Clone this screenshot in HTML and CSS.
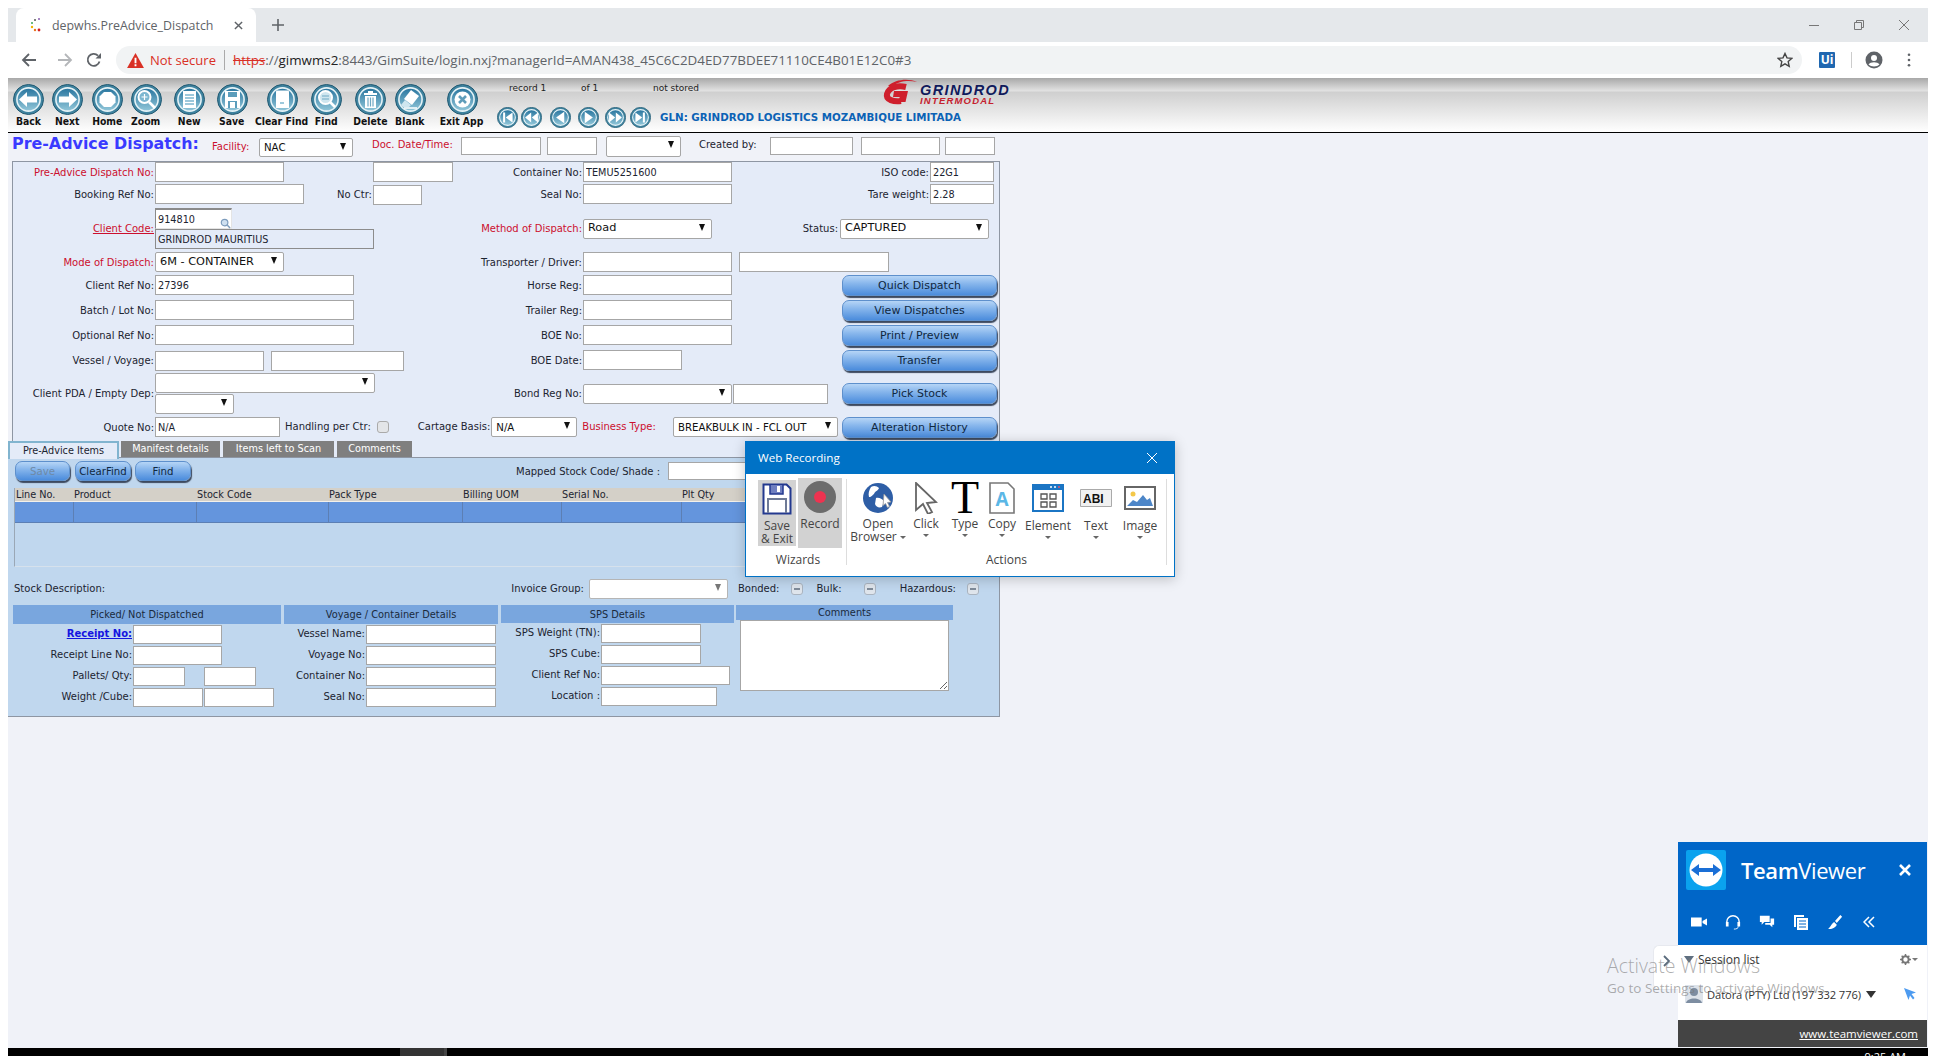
FILE: index.html
```html
<!DOCTYPE html>
<html lang="en">
<head>
<meta charset="utf-8">
<title>depwhs.PreAdvice_Dispatch</title>
<link rel="stylesheet" href="styles.css">
</head>
<body>
<svg class="defs" aria-hidden="true">
  <defs>
    <linearGradient id="disc" x1="0" y1="0" x2="0" y2="1"><stop offset="0" stop-color="#27749e"/><stop offset="1" stop-color="#93c8da"/></linearGradient>
    <symbol id="ring" viewBox="0 0 31 31"><circle cx="15.5" cy="15.5" r="15" fill="#3f839f" stroke="#235a72"/><circle cx="15.5" cy="15.5" r="11.6" fill="url(#disc)" stroke="#e6f3f7" stroke-width="1.6"/></symbol>
  </defs>
</svg>

<div class="window">
  <div class="tabstrip">
    <div class="ctab">
      <svg class="fav" viewBox="0 0 16 16"><circle cx="10" cy="2" r="1" fill="#8a5fb0"/><circle cx="6" cy="3" r="1" fill="#555"/><circle cx="3" cy="6" r="1" fill="#3aa655"/><circle cx="3" cy="10" r="1.2" fill="#f2b400"/><circle cx="6" cy="13" r="1.2" fill="#e9711c"/><circle cx="10" cy="13" r="1.4" fill="#d32020"/></svg>
      <span class="ctab-title">depwhs.PreAdvice_Dispatch</span>
      <svg class="ctab-x" viewBox="0 0 10 10"><path d="M1 1l8 8M9 1l-8 8" stroke="#5f6368" stroke-width="1.6"/></svg>
    </div>
    <svg class="plus" viewBox="0 0 12 12"><path d="M6 0v12M0 6h12" stroke="#5f6368" stroke-width="1.6"/></svg>
    <div class="winctl">
      <svg viewBox="0 0 12 12"><path d="M1 6.5h10" stroke="#777"/></svg>
      <svg viewBox="0 0 12 12"><path d="M1.5 3.5h7v7h-7zM3.5 3.5v-2h7v7h-2" fill="none" stroke="#777"/></svg>
      <svg viewBox="0 0 12 12"><path d="M1 1l10 10M11 1L1 11" stroke="#777"/></svg>
    </div>
  </div>

  <div class="navbar">
    <svg class="nav-ic" viewBox="0 0 16 16"><path d="M15 8H2M8 2L2 8l6 6" fill="none" stroke="#5f6368" stroke-width="1.8"/></svg>
    <svg class="nav-ic nav-fwd" viewBox="0 0 16 16"><path d="M1 8h13M8 2l6 6-6 6" fill="none" stroke="#b4b6b9" stroke-width="1.8"/></svg>
    <svg class="nav-ic nav-rel" viewBox="0 0 16 16"><path d="M13.5 9.5A6 6 0 1 1 12 3.6" fill="none" stroke="#5f6368" stroke-width="1.8"/><path d="M9.5 6.5H15V1z" fill="#5f6368"/></svg>
    <div class="omni">
      <svg class="warn" viewBox="0 0 18 16"><path d="M9 0l9 16H0z" fill="#d93025"/><path d="M8 5h2v6H8zM8 12h2v2H8z" fill="#fff"/></svg>
      <span class="insecure">Not secure</span>
      <span class="omni-sep"></span>
      <span class="url"><s class="https">https</s>://<b class="host">gimwms2</b>:8443/GimSuite/login.nxj?managerId=AMAN438_45C6C2D4ED77BDEE71110CE4B01E12C0#3</span>
      <svg class="star" viewBox="0 0 16 16"><path d="M8 1.5l2 4.4 4.8.5-3.6 3.2 1 4.7L8 11.9l-4.200 2.400 1-4.700L1.200 6.400 6 5.900z" fill="none" stroke="#444" stroke-width="1.400"/></svg>
    </div>
    <span class="ui-ext">Ui</span>
    <span class="nav-sep"></span>
    <svg class="avatar" viewBox="0 0 18 18"><circle cx="9" cy="9" r="8.500" fill="#5f6368"/><circle cx="9" cy="7" r="3" fill="#fff"/><path d="M3.500 13.500c2-3 9-3 11 0-2.500 2.500-8.500 2.500-11 0z" fill="#fff"/></svg>
    <svg class="kebab" viewBox="0 0 4 16"><circle cx="2" cy="2" r="1.500" fill="#5f6368"/><circle cx="2" cy="8" r="1.500" fill="#5f6368"/><circle cx="2" cy="14" r="1.500" fill="#5f6368"/></svg>
  </div>

  <header class="toolbar">
    <div class="tools">
      <div class="tb"><svg viewBox="0 0 31 31"><use href="#ring"/><path d="M6 15.500l8-7.500v4.500h10v6H14V23z" fill="#fff"/></svg><span>Back</span></div>
      <div class="tb m-1"><svg viewBox="0 0 31 31"><use href="#ring"/><path d="M25 15.500L17 8v4.500H7v6h10V23z" fill="#fff"/></svg><span>Next</span></div>
      <div class="tb"><svg viewBox="0 0 31 31"><use href="#ring"/><path d="M12 8h7l4.500 4.500v6L19 23h-7l-4.500-4.500v-6z" fill="#fff"/></svg><span>Home</span></div>
      <div class="tb m-1"><svg viewBox="0 0 31 31"><use href="#ring"/><circle cx="13.500" cy="13" r="6" fill="#7db7d0" stroke="#fff" stroke-width="2"/><path d="M18 18l6 6" stroke="#fff" stroke-width="2.600"/><path d="M10.500 13h6M13.500 10v6" stroke="#fff" stroke-width="1.200"/></svg><span>Zoom</span></div>
      <div class="tb m3"><svg viewBox="0 0 31 31"><use href="#ring"/><path d="M9 7h13v17H9z" fill="#fff"/><path d="M11 11h9M11 14h9M11 17h9M11 20h9" stroke="#7db7d0" stroke-width="1.500"/></svg><span>New</span></div>
      <div class="tb m3"><svg viewBox="0 0 31 31"><use href="#ring"/><path d="M8 7h15v17H8z" fill="#fff"/><path d="M11 8h9v5h-9zM11 17h9v7h-9z" fill="#5b9dbb"/><path d="M13 18h5v6h-5z" fill="#fff"/></svg><span>Save</span></div>
      <div class="tb m10"><svg viewBox="0 0 31 31"><use href="#ring"/><path d="M9 7.500a1 1 0 0 1 1-1h11a1 1 0 0 1 1 1V24H9z" fill="#fff"/><path d="M13 19h4" stroke="#7db7d0" stroke-width="1.500"/></svg><span>Clear Find</span></div>
      <div class="tb m4"><svg viewBox="0 0 31 31"><use href="#ring"/><circle cx="14.500" cy="13.500" r="6.500" fill="#cfe6ef" stroke="#fff" stroke-width="2"/><path d="M19 18l5 5" stroke="#fff" stroke-width="2.600"/><path d="M11 12h7M11 15h7" stroke="#6fa9c4"/></svg><span>Find</span></div>
      <div class="tb m4"><svg viewBox="0 0 31 31"><use href="#ring"/><path d="M9 9h13v2H9zM13 7h5v2h-5z" fill="#fff"/><path d="M10 12h11v12H10z" fill="#fff"/><path d="M13 13.500v9M15.500 13.500v9M18 13.500v9" stroke="#6fa9c4" stroke-width="1.200"/></svg><span>Delete</span></div>
      <div class="tb"><svg viewBox="0 0 31 31"><use href="#ring"/><path d="M16 6l8 6-7 9-8-6z" fill="#fff"/><path d="M10 16l6 5-2 2H8l-2-2z" fill="#cfe6ef"/><path d="M9 24h13" stroke="#fff" stroke-width="1.500"/></svg><span>Blank</span></div>
      <div class="tb m12"><svg viewBox="0 0 31 31"><use href="#ring"/><circle cx="15.500" cy="15.500" r="8" fill="#fff"/><path d="M12 12l7 7M19 12l-7 7" stroke="#5f9dba" stroke-width="2.600"/></svg><span>Exit App</span></div>
    </div>
    <div class="recnav">
      <div class="recinfo"><span class="ri1">record 1</span><span class="ri2">of 1</span><span>not stored</span></div>
      <div class="recbtm">
        <svg class="nb" viewBox="0 0 31 31"><use href="#ring"/><path d="M9 8h3v15H9zM23 8v15l-10-7.500z" fill="#fff"/></svg>
        <svg class="nb" viewBox="0 0 31 31"><use href="#ring"/><path d="M15 8v15L6 15.500zM25 8v15l-9-7.500z" fill="#fff"/></svg>
        <svg class="nb nb-gap" viewBox="0 0 31 31"><use href="#ring"/><path d="M21 7v17L9 15.500z" fill="#fff"/></svg>
        <svg class="nb nb-gap2" viewBox="0 0 31 31"><use href="#ring"/><path d="M10 7v17l12-8.500z" fill="#fff"/></svg>
        <svg class="nb nb-gap3" viewBox="0 0 31 31"><use href="#ring"/><path d="M6 8v15l9-7.500zM16 8v15l9-7.500z" fill="#fff"/></svg>
        <svg class="nb nb-gap4" viewBox="0 0 31 31"><use href="#ring"/><path d="M8 8v15l10-7.500zM19 8h3v15h-3z" fill="#fff"/></svg>
        <span class="gln">GLN: GRINDROD LOGISTICS MOZAMBIQUE LIMITADA</span>
      </div>
    </div>
    <div class="logo">
      <svg class="logo-g" viewBox="0 0 37 26"><path d="M7 7C14 0 28-1 36 3 27 1 17 2 10.500 8z" fill="#cf1f2c"/><path d="M25 8C17 6 8 8 6 15c-1.500 6 7 8 14 7" fill="none" stroke="#cf1f2c" stroke-width="6"/><path d="M13 12h14l-2.500 11h-7l1.200-5H12z" fill="#cf1f2c"/></svg>
      <div class="logo-t"><b>GRINDROD</b><i>INTERMODAL</i></div>
    </div>
  </header>

  <main class="page">
    <div class="titlebar">
      <h1>Pre-Advice Dispatch:</h1>
      <label class="lbl req t-fac">Facility:</label>
      <div class="sel w94 t-s1"><select><option>NAC</option></select></div>
      <label class="lbl req t-doc">Doc. Date/Time:</label>
      <input class="w80 t-i1" type="text">
      <input class="w50 t-i2" type="text">
      <div class="sel w75 t-s2"><select><option></option></select></div>
      <label class="lbl t-crt">Created by:</label>
      <input class="w83 t-i3" type="text">
      <input class="w79 t-i4" type="text">
      <input class="w50 t-i4b" type="text">
    </div>

    <div class="form">
      <div class="row r1">
        <label class="lbl la req">Pre-Advice Dispatch No:</label>
        <div class="col2"><div class="a"><input class="w129" type="text"></div><input class="w80" type="text"></div>
        <label class="lbl lc">Container No:</label>
        <div class="col4"><input class="w149" type="text" value="TEMU5251600"><label class="lbl push">ISO code:</label><input class="w64 rgt3" type="text" value="22G1"></div>
      </div>
      <div class="row r2">
        <label class="lbl la">Booking Ref No:</label>
        <div class="col2"><div class="a"><input class="w149" type="text"><label class="lbl">No Ctr:</label></div><input class="w49 mt1" type="text"></div>
        <label class="lbl lc">Seal No:</label>
        <div class="col4"><input class="w149" type="text"><label class="lbl push">Tare weight:</label><input class="w64 rgt3" type="text" value="2.28"></div>
      </div>
      <div class="row r3 mid">
        <label class="lbl la req link">Client Code:</label>
        <div class="col2 stack">
          <div class="lookup"><input class="w77 bevel" type="text" value="914810">
            <svg class="lens" viewBox="0 0 12 12"><circle cx="5" cy="5" r="3.600" fill="#cfe0f0" stroke="#7d9cbc" stroke-width="1.300"/><path d="M8 8l3 3" stroke="#7d9cbc" stroke-width="1.600"/></svg>
          </div>
          <input class="w219 ro" type="text" value="GRINDROD MAURITIUS">
        </div>
        <label class="lbl lc req">Method of Dispatch:</label>
        <div class="col4 mid"><div class="sel w129 big"><select><option>Road</option></select></div><label class="lbl push">Status:</label><div class="sel w149 big rgt8"><select><option>CAPTURED</option></select></div></div>
      </div>
      <div class="row r4">
        <label class="lbl la req">Mode of Dispatch:</label>
        <div class="col2"><div class="sel w129 big"><select><option>6M - CONTAINER</option></select></div></div>
        <label class="lbl lc">Transporter / Driver:</label>
        <div class="col4 gap7"><input class="w149" type="text"><input class="w150" type="text"></div>
      </div>
      <div class="row r5">
        <label class="lbl la">Client Ref No:</label>
        <div class="col2"><input class="w199" type="text" value="27396"></div>
        <label class="lbl lc">Horse Reg:</label>
        <div class="col4"><input class="w149" type="text"><button class="btn act" type="button">Quick Dispatch</button></div>
      </div>
      <div class="row r5">
        <label class="lbl la">Batch / Lot No:</label>
        <div class="col2"><input class="w199" type="text"></div>
        <label class="lbl lc">Trailer Reg:</label>
        <div class="col4"><input class="w149" type="text"><button class="btn act" type="button">View Dispatches</button></div>
      </div>
      <div class="row r5">
        <label class="lbl la">Optional Ref No:</label>
        <div class="col2"><input class="w199" type="text"></div>
        <label class="lbl lc">BOE No:</label>
        <div class="col4"><input class="w149" type="text"><button class="btn act" type="button">Print / Preview</button></div>
      </div>
      <div class="row r8">
        <label class="lbl la">Vessel / Voyage:</label>
        <div class="col2 gap7 mt1"><input class="w109" type="text"><input class="w133" type="text"></div>
        <label class="lbl lc">BOE Date:</label>
        <div class="col4"><input class="w99" type="text"><button class="btn act" type="button">Transfer</button></div>
      </div>
      <div class="row r9 mid">
        <label class="lbl la">Client PDA / Empty Dep:</label>
        <div class="col2 stack gap1">
          <div class="sel w220"><select><option></option></select></div>
          <div class="sel w79"><select><option></option></select></div>
        </div>
        <label class="lbl lc">Bond Reg No:</label>
        <div class="col4 gap1 mid"><div class="sel w149"><select><option></option></select></div><input class="w95" type="text"><button class="btn act act2" type="button">Pick Stock</button></div>
      </div>
      <div class="row r10">
        <label class="lbl la">Quote No:</label>
        <input class="w125" type="text" value="N/A">
        <label class="lbl h-l">Handling per Ctr:</label>
        <input class="chk h-c" type="checkbox">
        <label class="lbl c-l">Cartage Basis:</label>
        <div class="sel w86 c-s"><select><option>N/A</option></select></div>
        <label class="lbl req b-l">Business Type:</label>
        <div class="sel w165 b-s"><select><option>BREAKBULK IN - FCL OUT</option></select></div>
        <button class="btn act b-b" type="button">Alteration History</button>
      </div>
    </div>

    <nav class="tabs">
      <a class="tab on">Pre-Advice Items</a>
      <a class="tab t1">Manifest details</a>
      <a class="tab t2">Items left to Scan</a>
      <a class="tab t3">Comments</a>
    </nav>

    <section class="lower">
      <div class="l-btns">
        <button class="btn sm dis" type="button">Save</button>
        <button class="btn sm" type="button">ClearFind</button>
        <button class="btn sm" type="button">Find</button>
        <label class="lbl mapped">Mapped Stock Code/ Shade :</label>
        <input class="w120" type="text">
      </div>
      <div class="gridwrap">
        <table class="grid">
          <colgroup><col class="c1"><col class="c2"><col class="c3"><col class="c4"><col class="c5"><col class="c6"><col class="c7"></colgroup>
          <thead><tr><th>Line No.</th><th>Product</th><th>Stock Code</th><th>Pack Type</th><th>Billing UOM</th><th>Serial No.</th><th>Plt Qty</th></tr></thead>
          <tbody><tr><td></td><td></td><td></td><td></td><td></td><td></td><td></td></tr></tbody>
        </table>
      </div>
      <div class="stock">
        <label class="lbl">Stock Description:</label>
        <label class="lbl s-inv">Invoice Group:</label>
        <div class="sel w139 dimmed"><select><option></option></select></div>
        <label class="lbl s-bon">Bonded:</label><span class="dash d1"></span>
        <label class="lbl s-bul">Bulk:</label><span class="dash d2"></span>
        <label class="lbl s-haz">Hazardous:</label><span class="dash d3"></span>
      </div>
      <div class="details">
        <div class="sect s-a">
          <h3>Picked/ Not Dispatched</h3>
          <div class="drow"><a class="lbl dl link-b">Receipt No:</a><input class="w89" type="text"></div>
          <div class="drow"><label class="lbl dl">Receipt Line No:</label><input class="w89" type="text"></div>
          <div class="drow"><label class="lbl dl">Pallets/ Qty:</label><input class="w52" type="text"><input class="w52 ml19" type="text"></div>
          <div class="drow"><label class="lbl dl">Weight /Cube:</label><input class="w70" type="text"><input class="w70 ml1" type="text"></div>
        </div>
        <div class="sect s-b">
          <h3>Voyage / Container Details</h3>
          <div class="drow"><label class="lbl dl">Vessel Name:</label><input class="w130" type="text"></div>
          <div class="drow"><label class="lbl dl">Voyage No:</label><input class="w130" type="text"></div>
          <div class="drow"><label class="lbl dl">Container No:</label><input class="w130" type="text"></div>
          <div class="drow"><label class="lbl dl">Seal No:</label><input class="w130" type="text"></div>
        </div>
        <div class="sect s-c">
          <h3>SPS Details</h3>
          <div class="drow"><label class="lbl dl">SPS Weight (TN):</label><input class="w100" type="text"></div>
          <div class="drow"><label class="lbl dl">SPS Cube:</label><input class="w100" type="text"></div>
          <div class="drow"><label class="lbl dl">Client Ref No:</label><input class="w129" type="text"></div>
          <div class="drow"><label class="lbl dl">Location :</label><input class="w116" type="text"></div>
        </div>
        <div class="sect s-d">
          <h3>Comments</h3>
          <textarea></textarea>
        </div>
      </div>
    </section>
  </main>

  <footer class="taskbar"><span class="task-item"></span><span class="clock">9:25 AM</span></footer>
</div>

<aside class="rec">
  <div class="rec-title"><span>Web Recording</span>
    <svg viewBox="0 0 12 12"><path d="M1 1l10 10M11 1L1 11" stroke="#fff" stroke-width="1"/></svg>
  </div>
  <div class="rec-body">
    <div class="grp g-w">
      <div class="g-tools wiz">
        <div class="wtool w-save">
          <svg viewBox="0 0 30 32"><path d="M1.500 1.500h23l4 4v25h-27z" fill="#fff" stroke="#23398f" stroke-width="2"/><path d="M8 2v9h13V2" fill="#6f7fc0" stroke="#23398f" stroke-width="1.500"/><path d="M15 3h3v6h-3z" fill="#fff"/><path d="M6 30V16h18v14" fill="none" stroke="#6e7a96" stroke-width="2"/></svg>
          <span>Save<br>&amp; Exit</span>
        </div>
        <div class="wtool w-rec">
          <svg viewBox="0 0 32 32"><circle cx="16" cy="16" r="16" fill="#6c6c6c"/><circle cx="16" cy="16" r="6" fill="#ee3350"/></svg>
          <span>Record</span>
        </div>
      </div>
      <p class="cap">Wizards</p>
    </div>
    <div class="grp g-a">
      <div class="g-tools act-tools">
        <div class="tool t48"><div class="ti"><svg class="i30" viewBox="0 0 30 30"><circle cx="15" cy="15" r="15" fill="#2e5ea6"/><path d="M8 4c3-2 6-1 8 1-1 3-4 3-5 6-2 1-2 3-5 3-1-3 0-7 2-10zM13 15c3-1 6 1 8 3l-2 6c-3 1-6 0-7-3z" fill="#fff"/><path d="M21 11l7 8-3.500.5 2 4-2 1-2-4-2.500 2z" fill="#fff" stroke="#999" stroke-width=".8"/></svg></div><span>Open<br>Browser<i class="care inl"></i></span></div>
        <div class="tool t48"><div class="ti"><svg class="i-cur" viewBox="0 0 24 32"><path d="M2 1l20 19-9 1 5 9-4 2-5-10-7 6z" fill="#fff" stroke="#666" stroke-width="1.800"/></svg></div><span>Click</span><i class="care"></i></div>
        <div class="tool t30"><div class="ti"><span class="bigT">T</span></div><span>Type</span><i class="care"></i></div>
        <div class="tool t44"><div class="ti"><svg class="i-doc" viewBox="0 0 26 32"><path d="M1 1h18l6 6v24H1z" fill="#fff" stroke="#777" stroke-width="1.600"/><text x="13" y="24" class="doc-a">A</text></svg></div><span>Copy</span><i class="care"></i></div>
        <div class="tool t48 low"><div class="ti"><svg class="i-el" viewBox="0 0 32 28"><path d="M0 0h32v28H0z" fill="#1b75c4"/><path d="M2 6h28v20H2z" fill="#fff"/><path d="M9 10h6v5H9zM18 10h6v5h-6zM9 18h6v5H9zM18 18h6v5h-6z" fill="none" stroke="#555" stroke-width="1.300"/><circle cx="19" cy="3" r="1" fill="#fff"/><circle cx="23" cy="3" r="1" fill="#fff"/><circle cx="27" cy="3" r="1" fill="#e8516b"/></svg></div><span>Element</span><i class="care"></i></div>
        <div class="tool t48 low"><div class="ti"><svg class="i-txt" viewBox="0 0 32 18"><path d="M.5.500h31v17H.500z" fill="#f1f1f1" stroke="#aaa"/><text x="3" y="14" class="abi">ABI</text></svg></div><span>Text</span><i class="care"></i></div>
        <div class="tool t40 low"><div class="ti"><svg class="i-img" viewBox="0 0 32 24"><path d="M1 1h30v22H1z" fill="#fff" stroke="#666" stroke-width="2"/><circle cx="9" cy="8" r="2.500" fill="#f4c84a"/><path d="M3 20l6-6 4 2 6-7 4 5 3-2 3 8z" fill="#4d86c8"/></svg></div><span>Image</span><i class="care"></i></div>
      </div>
      <p class="cap">Actions</p>
    </div>
  </div>
</aside>

<aside class="tv">
  <div class="tv-head">
    <div class="tv-top">
      <svg class="tv-logo" viewBox="0 0 40 40"><rect width="40" height="40" rx="2" fill="#0aa2ee"/><circle cx="20" cy="20" r="16.500" fill="#fff"/><path d="M5 20l8-6v4h14v-4l8 6-8 6v-4H13v4z" fill="#1a6fd6"/></svg>
      <span class="tv-name"><b>Team</b>Viewer</span>
      <svg class="tv-x" viewBox="0 0 12 12"><path d="M1 1l10 10M11 1L1 11" stroke="#fff" stroke-width="2.600"/></svg>
    </div>
    <div class="tv-icons">
      <svg viewBox="0 0 18 12"><path d="M0 1h12v10H0zM13 5l5-3v8l-5-3z" fill="#fff"/></svg>
      <svg viewBox="0 0 18 18"><path d="M2 11V9a7 7 0 0 1 14 0v2" fill="none" stroke="#fff" stroke-width="1.600"/><path d="M1 9h3v5H1zM14 9h3v5h-3z" fill="#fff"/><path d="M15 14c0 2-2 3-5 3" fill="none" stroke="#fff"/></svg>
      <svg viewBox="0 0 18 16"><path d="M1 1h11v7H6l-3 3V8H1z" fill="#fff"/><path d="M13 4h4v7h-2v3l-3-3H7V9h6z" fill="#fff"/></svg>
      <svg viewBox="0 0 16 16"><path d="M1 1h10v2H3v10H1zM4 4h11v12H4z" fill="#fff"/><path d="M6 7h7M6 10h7M6 13h7" stroke="#0066c8"/></svg>
      <svg viewBox="0 0 18 18"><path d="M15 1l2 2-6 7-2-2zM8 9l3 3c-1 3-5 5-10 5 3-2 3-5 7-8z" fill="#fff"/></svg>
      <svg class="tv-more" viewBox="0 0 12 12"><path d="M6 1L1 6l5 5M11 1L6 6l5 5" fill="none" stroke="#fff" stroke-width="1.500"/></svg>
    </div>
  </div>
  <div class="tv-list">
    <div class="tv-l1"><i class="tri"></i><span>Session list</span>
      <svg class="gear" viewBox="0 0 12 12"><circle cx="6" cy="6" r="3.500" fill="none" stroke="#777" stroke-width="2.200"/><path d="M6 0v2.500M6 9.500V12M0 6h2.500M9.500 6H12M1.800 1.800l1.700 1.700M8.500 8.500l1.700 1.700M10.200 1.800L8.500 3.500M3.500 8.500l-1.700 1.700" stroke="#777" stroke-width="1.600"/></svg>
      <i class="tri sm-tri"></i>
    </div>
    <div class="tv-l2">
      <svg class="tv-av" viewBox="0 0 18 18"><path d="M0 0h18v18H0z" fill="#dde3ea"/><circle cx="9" cy="7" r="4" fill="#7d8da1"/><path d="M1 18c1-6 15-6 16 0z" fill="#7d8da1"/></svg>
      <span>Datora (PTY) Ltd (197 332 776)</span><i class="tri dark"></i>
      <svg class="tv-cur" viewBox="0 0 12 12"><path d="M0 0l12 4.500-4.500 1.500 3 4-1.500 1.500-3-4L4.500 12z" fill="#4d9bf0"/></svg>
    </div>
  </div>
  <div class="tv-foot"><a>www.teamviewer.com</a></div>
  <div class="tv-side"><svg viewBox="0 0 8 12"><path d="M1 1l5 5-5 5" fill="none" stroke="#5a6b7d" stroke-width="1.800"/></svg></div>
</aside>

<div class="activate"><p>Activate Windows</p><small>Go to Settings to activate Windows.</small></div>
</body>
</html>
```
FILE: styles.css
```css
* { box-sizing: border-box; }
html, body { margin: 0; padding: 0; }
body { position: relative; width: 1936px; height: 1056px; overflow: hidden; background: #fff; font-family: "DejaVu Sans", Verdana, sans-serif; font-size: 10px; color: #1c2430; }
.defs { position: absolute; width: 0; height: 0; }
svg { display: block; flex: none; }

.window { display: flex; flex-direction: column; height: 1056px; padding: 8px 8px 0; }

/* browser chrome */
.tabstrip { height: 34px; background: #e5e8eb; display: flex; align-items: flex-end; padding-left: 8px; flex: none; }
.ctab { width: 240px; height: 34px; background: #fff; border-radius: 8px 8px 0 0; display: flex; align-items: center; padding-left: 13px; }
.fav { width: 16px; height: 16px; }
.ctab-title { margin-left: 7px; width: 166px; font: 12.4px "Open Sans", sans-serif; color: #5f6368; white-space: nowrap; }
.ctab-x { width: 9px; height: 9px; margin-left: 16px; }
.plus { width: 12px; height: 12px; margin: 0 0 11px 16px; }
.winctl { margin-left: auto; display: flex; gap: 33px; align-self: center; margin-right: 18px; }
.winctl svg { width: 12px; height: 12px; }

.navbar { height: 36px; display: flex; align-items: center; flex: none; background: #fff; }
.nav-ic { width: 16px; height: 16px; margin-left: 13px; }
.nav-fwd { margin-left: 20px; }
.nav-rel { margin-left: 13px; }
.omni { margin-left: 14px; width: 1686px; height: 28px; background: #f1f3f4; border-radius: 14px; display: flex; align-items: center; padding-left: 11px; }
.warn { width: 17px; height: 15px; }
.insecure { margin-left: 6px; font: 13px "Open Sans", sans-serif; color: #d93025; }
.omni-sep { width: 1px; height: 20px; background: #aaa; margin: 0 8px; }
.url { font: 13.380px "Open Sans", sans-serif; color: #5f6368; white-space: nowrap; }
.https { color: #d93025; }
.host { font-weight: 400; color: #222; }
.star { width: 16px; height: 16px; margin-left: auto; margin-right: 9px; }
.ui-ext { margin-left: 17px; width: 16px; height: 16px; background: #2067b0; color: #fff; font: 700 12px/16px "Open Sans", sans-serif; text-align: center; border-radius: 1px; }
.nav-sep { width: 1px; height: 16px; background: #ccc; margin-left: 16px; }
.avatar { width: 18px; height: 18px; margin-left: 13px; }
.kebab { width: 4px; height: 14px; margin-left: 24px; }

/* app toolbar */
.toolbar { height: 55px; flex: none; display: flex; border-bottom: 1px solid #000; background: linear-gradient(#a8a8a8 0, #dedede 12px, #e2e2e2 13px, #cfcfcf 14px, #fff 54px); }
.tools { display: flex; width: 492px; padding-top: 6px; flex: none; }
.tb { width: 40px; display: flex; flex-direction: column; align-items: center; }
.tb svg { width: 31px; height: 31px; }
.tb span { font: 700 10px/13px "DejaVu Sans", sans-serif; color: #111; white-space: nowrap; transform: scaleX(.93); }
.m-1 { margin-left: -1px; }
.m3 { margin-left: 3px; }
.m4 { margin-left: 4px; }
.m10 { margin-left: 10px; }
.m12 { margin-left: 12px; }

.recnav { width: 380px; flex: none; }
.recinfo { height: 28px; padding: 4px 0 0 9px; display: flex; font: 9px/12px "DejaVu Sans", sans-serif; color: #222; }
.ri1 { width: 72px; }
.ri2 { width: 72px; }
.recbtm { display: flex; align-items: center; height: 22px; padding-left: 0; }
.nb { width: 21px; height: 21px; margin-right: 4px; margin-left: -1px; }
.nb:first-child { margin-left: -3px; }
.nb-gap { margin-left: 4px; }
.nb-gap2 { margin-left: 3px; }
.nb-gap3 { margin-left: 2px; }
.nb-gap4 { margin-left: 0; }
.gln { font: 700 10.300px "DejaVu Sans", sans-serif; color: #0b62b5; margin-left: 5px; white-space: nowrap; }
.logo { display: flex; margin-left: 1px; margin-top: 1px; height: 26px; }
.logo-g { width: 37px; height: 26px; }
.logo-t { display: flex; flex-direction: column; margin-left: 2px; padding-top: 6px; }
.logo-t b { font: italic 700 14.500px/11px "Liberation Sans", sans-serif; color: #101a5c; letter-spacing: 1.400px; white-space: nowrap; }
.logo-t i { font: italic 700 9.500px/10px "Liberation Sans", sans-serif; color: #c5202d; letter-spacing: 1.200px; white-space: nowrap; }

/* page */
.page { flex: 1; background: #f0f2f8; display: flex; flex-direction: column; min-height: 0; }
.titlebar { height: 28px; flex: none; display: flex; align-items: center; padding-left: 4px; }
h1 { margin: -7px 0 0; font: 700 15.900px "DejaVu Sans", sans-serif; color: #3a3aff; white-space: nowrap; width: 200px; flex: none; }
input[type=text] { height: 20px; padding: 1px 2px 0; border: 1px solid #a6a6a6; background: #fff; font: 9.700px "DejaVu Sans", sans-serif; color: #1c2430; outline: 0; flex: none; border-radius: 0; }
.sel { position: relative; height: 20px; flex: none; }
.sel select { width: 100%; height: 100%; appearance: none; border: 1px solid #a6a6a6; border-radius: 2px; background: #fff; padding: 0 4px; font: 10.200px "DejaVu Sans", sans-serif; color: #111; outline: 0; }
.sel.big select { font-size: 11.300px; padding-bottom: 2px; }
.sel::after { content: ""; position: absolute; right: 7px; top: 5px; border: 3.500px solid transparent; border-top: 7px solid #111; border-bottom: 0; }
.lbl { white-space: nowrap; line-height: 20px; flex: none; }
.req { color: #cc0f2e; }
.t-fac { width: 47px; }
.t-s1 { height: 19px; margin-top: 1px; }
.t-doc { margin-left: 19px; width: 89px; margin-top: -4px; }
.t-i1 { margin-top: -2px; height: 18px !important; }
.t-i2 { margin-left: 6px; margin-top: -2px; height: 18px !important; }
.t-s2 { margin-left: 9px; margin-top: -1px; height: 21px; }
.t-crt { margin-left: 18px; width: 71px; margin-top: -4px; }
.t-i3, .t-i4, .t-i4b { margin-top: -2px; height: 18px !important; }
.t-i4 { margin-left: 8px; }
.t-i4b { margin-left: 5px; }

.w49 { width: 49px; } .w50 { width: 50px; } .w52 { width: 52px; } .w64 { width: 64px; } .w70 { width: 70px; } .w75 { width: 75px; } .w77 { width: 77px; }
.w79 { width: 79px; } .w80 { width: 80px; } .w83 { width: 83px; } .w86 { width: 86px; } .w89 { width: 89px; } .w94 { width: 94px; } .w95 { width: 95px; }
.w99 { width: 99px; } .w100 { width: 100px; } .w109 { width: 109px; } .w116 { width: 116px; } .w120 { width: 120px; } .w125 { width: 125px; } .w129 { width: 129px; } .w130 { width: 130px; }
.w133 { width: 133px; } .w139 { width: 139px; } .w149 { width: 149px; } .w150 { width: 150px; } .w165 { width: 165px; } .w199 { width: 199px; } .w219 { width: 219px; } .w220 { width: 220px; }

/* main form */
.form { flex: none; margin-left: 4px; width: 988px; height: 280px; border: 1px solid #8e96a3; border-bottom: 0; background: #e4ebf8; padding: 0 2px 0 0; }
.row { display: flex; align-items: flex-start; }
.mid { align-items: center; }
.r1 { height: 20px; margin-bottom: 2px; }
.r2 { height: 21px; margin-bottom: 3px; }
.r3 { height: 41px; margin-bottom: 3px; }
.r4 { height: 20px; margin-bottom: 3px; }
.r5 { height: 22px; margin-bottom: 3px; }
.r8 { height: 22px; margin-bottom: 1px; }
.r9 { height: 41px; margin-bottom: 3px; }
.r10 { height: 22px; }
.la { width: 142px; padding-right: 1px; text-align: right; line-height: 21px; }
.lc { width: 113px; padding-right: 1px; text-align: right; line-height: 21px; }
.col2 { width: 315px; display: flex; flex: none; }
.col2 .a { width: 218px; display: flex; justify-content: space-between; }
.col2 .a .lbl { padding-right: 1px; line-height: 21px; }
.col4 { flex: 1; display: flex; }
.stack { flex-direction: column; }
.gap1 { gap: 1px; }
.gap7 { gap: 7px; }
.mt1 { margin-top: 1px; }
.push { margin-left: auto; padding-right: 1px; line-height: 21px; }
.rgt3 { margin-right: 3px; }
.rgt8 { margin-right: 8px; margin-left: 1px; }
.link { text-decoration: underline; }
.lookup { position: relative; width: 77px; height: 21px; }
.bevel { border-color: #8a8a8a #e4e4e4 #e4e4e4 #8a8a8a !important; border-width: 2px 1px 1px 1px !important; height: 21px !important; }
.lens { position: absolute; left: 65px; top: 10px; width: 11px; height: 11px; }
input[type=text].ro { background: #e4ebf8; border-color: #8c8c8c; }
.btn { font: 11px "DejaVu Sans", sans-serif; color: #10283f; border: 1px solid #5e90cc; border-radius: 7px; background: linear-gradient(#b6d5f6, #87b6ec 40%, #4b8cdc); box-shadow: 1px 2px 1px #3d4a5f; padding: 0; cursor: pointer; }
.act { margin-left: auto; width: 155px; height: 21px; }
.act2 { margin-left: 13px; }
.h-l { margin-left: 5px; }
.chk { appearance: none; margin: 4px 0 0 6px; width: 12px; height: 12px; border: 1px solid #aaa; border-radius: 3px; background: #e3e5e8; flex: none; }
.c-l { margin-left: 29px; }
.c-s { margin-left: 1px; }
.b-l { margin-left: 5px; }
.b-s { margin-left: 17px; }
.b-b { margin-left: 4px; }

/* tabs */
.tabs { flex: none; width: 992px; height: 17px; display: flex; background: #e4ebf8; border-right: 1px solid #8e96a3; border-bottom: 1px solid #8e96a3; position: relative; }
.tab { font: 9.700px/15px "DejaVu Sans", sans-serif; color: #fff; background: #7f7f7f; height: 16px; text-align: center; white-space: nowrap; }
.tab.on { width: 111px; height: 18px; background: #e4ebf8; color: #1c2430; border: 2px solid #81b4cf; border-bottom: 0; line-height: 15px; }
.t1 { width: 99px; margin-left: 2px; }
.t2 { width: 111px; margin-left: 3px; }
.t3 { width: 75px; margin-left: 3px; }

/* lower part */
.lower { flex: none; width: 992px; height: 259px; background: #c0d7ee; border-right: 1px solid #8e96a3; border-bottom: 1px solid #8e96a3; display: flex; flex-direction: column; }
.l-btns { display: flex; height: 21px; margin-top: 3px; padding-left: 7px; flex: none; }
.sm { height: 20px; width: 56px; margin-right: 4px; font-size: 10.200px; }
.dis { width: 55px; margin-right: 5px; color: #6f8aa6; }
.mapped { width: 465px; text-align: right; line-height: 22px; }
.l-btns input { margin-left: 8px; height: 18px !important; margin-top: 1px; }
.gridwrap { margin: 6px 0 0 6px; height: 79px; flex: none; width: 980px; border-left: 1px solid #9aa7b5; border-bottom: 1px solid #d6e1ec; }
.grid { border-collapse: collapse; table-layout: fixed; width: 800px; }
.c1 { width: 58px; } .c2 { width: 123px; } .c3 { width: 132px; } .c4 { width: 134px; } .c5 { width: 99px; } .c6 { width: 120px; } .c7 { width: 134px; }
.grid th { background: #d4d0c8; height: 13px; padding: 1px 0 0 1px; font: 400 9.700px/12px "DejaVu Sans", sans-serif; text-align: left; border-bottom: 1px solid #f2f0ea; white-space: nowrap; }
.grid td { background: #6495dd; height: 21px; padding: 0; border-right: 1px solid #5c7fb4; border-bottom: 1px solid #5c7fb4; }
.stock { display: flex; height: 20px; margin-top: 12px; padding-left: 6px; flex: none; align-items: center; }
.stock .lbl { line-height: 20px; }
.s-inv { margin-left: 406px; }
.stock .sel { margin-left: 5px; }
.dimmed::after { border-top-color: #777; }
.dimmed select { border-color: #b5b5b5; }
.s-bon { margin-left: 10px; }
.dash { width: 12px; height: 12px; border: 1px solid #aab4c0; border-radius: 3px; background: #dfe5ec; flex: none; position: relative; }
.dash::after { content: ""; position: absolute; left: 2px; right: 2px; top: 4px; height: 2px; background: #7f8b99; }
.d1 { margin-left: 12px; } .d2 { margin-left: 22px; } .d3 { margin-left: 11px; }
.s-bul { margin-left: 13px; } .s-haz { margin-left: 24px; }

.details { display: flex; margin-top: 6px; padding-left: 5px; }
.sect { flex: none; }
.sect h3 { margin: 0; height: 19px; background: #79a6de; font: 400 9.800px/19px "DejaVu Sans", sans-serif; text-align: center; color: #1a2a3c; }
.s-a { width: 268px; }
.s-b { width: 214px; margin-left: 3px; }
.s-c { width: 233px; margin-left: 3px; }
.s-c h3 { height: 18px; }
.s-d { width: 217px; margin-left: 2px; }
.s-d h3 { height: 15px; line-height: 15px; }
.drow { display: flex; height: 19px; margin-top: 2px; }
.drow:first-of-type { margin-top: 1px; }
.s-c .drow:first-of-type { margin-top: 1px; }
.drow input { height: 19px !important; }
.drow .lbl { line-height: 18px; text-align: right; padding-right: 1px; }
.s-a .dl { width: 120px; }
.s-b .dl { width: 82px; }
.s-c .dl { width: 100px; }
.link-b { color: #1414e0; font-weight: 700; text-decoration: underline; }
.ml1 { margin-left: 1px; }
.ml19 { margin-left: 19px; }
textarea { display: block; width: 209px; height: 71px; margin: 0 0 0 4px; border: 1px solid #a6a6a6; background: #fff; border-radius: 0; }

.taskbar { height: 8px; flex: none; background: #000; position: relative; display: flex; overflow: hidden; }
.task-item { width: 47px; margin-left: 392px; background: #333; border-right: 3px solid #444; }
.clock { margin-left: auto; margin-right: 22px; color: #fff; font: 11px/14px "Open Sans", sans-serif; padding-top: 2px; }

/* Web Recording window */
.rec { position: absolute; left: 745px; top: 441px; width: 430px; height: 136px; background: #fff; border: 1px solid #0072c6; box-shadow: 0 2px 12px rgba(0,0,0,.22); font: 12px "Open Sans", sans-serif; color: #444; }
.rec-title { height: 33px; margin: -1px -1px 0; background: #0072c6; color: #fff; display: flex; align-items: center; justify-content: space-between; padding: 0 17px 0 13px; font-size: 11.600px; }
.rec-title svg { width: 12px; height: 12px; }
.rec-body { display: flex; height: 102px; }
.grp { display: flex; flex-direction: column; flex: none; position: relative; }
.g-tools { display: flex; height: 73px; flex: none; }
.cap { margin: 0; text-align: center; line-height: 16px; font-size: 12px; flex: none; }
.g-w { width: 97px; margin-left: 4px; border-right: 1px solid #ddd; height: 86px; margin-top: 5px; }
.g-w .g-tools { padding-left: 8px; gap: 2px; }
.g-a { width: 320px; height: 86px; margin-top: 5px; border-right: 1px solid #ddd; }
.act-tools { padding-left: 7px; }
.wtool { display: flex; flex-direction: column; align-items: center; background: #d2d2d2; text-align: center; line-height: 13px; }
.w-save { width: 38px; height: 66px; margin-top: 1px; padding-top: 3px; }
.w-save svg { width: 30px; height: 32px; margin-bottom: 4px; }
.w-rec { width: 44px; height: 70px; margin-top: -1px; padding-top: 3px; }
.w-rec svg { width: 32px; height: 32px; margin-bottom: 4px; }
.wtool span { display: block; }
.tool { display: flex; flex-direction: column; align-items: center; text-align: center; line-height: 13px; flex: none; margin-top: 2px; position: relative; white-space: nowrap; }
.t48 { width: 48px; } .t44 { width: 44px; } .t40 { width: 40px; } .t30 { width: 30px; }
.ti { height: 34px; display: flex; align-items: center; justify-content: center; margin-bottom: 2px; }
.low .ti { margin-bottom: 4px; }
.i30 { width: 30px; height: 30px; }
.i-cur { width: 24px; height: 32px; }
.i-doc { width: 26px; height: 32px; }
.i-el { width: 32px; height: 28px; }
.i-txt { width: 32px; height: 18px; }
.i-img { width: 32px; height: 24px; }
.bigT { font: 46px/34px "Liberation Serif", serif; color: #000; }
.doc-a { font: 700 19px "Open Sans", sans-serif; fill: #5bb7e6; text-anchor: middle; }
.abi { font: 700 12px "Liberation Sans", sans-serif; fill: #111; }
.care { display: block; width: 0; height: 0; border: 3.500px solid transparent; border-top: 3.500px solid #666; border-bottom: 0; margin-top: 4px; }
.care.inl { display: inline-block; margin: 0 0 2px 3px; }

/* TeamViewer */
.tv { position: absolute; left: 1678px; top: 842px; width: 249px; height: 205px; background: #fff; font: 11.500px "Open Sans", sans-serif; color: #333; border-bottom: 1px solid #ccd; }
.tv-head { height: 103px; background: #0066c8; padding: 8px 0 0 8px; }
.tv-top { display: flex; align-items: center; height: 40px; }
.tv-logo { width: 40px; height: 40px; }
.tv-name { margin-left: 15px; font: 22px "Open Sans", sans-serif; color: #fff; letter-spacing: -.4px; }
.tv-name b { font-weight: 600; }
.tv-x { width: 12px; height: 12px; margin-left: auto; margin-right: 16px; }
.tv-icons { display: flex; align-items: center; gap: 18px; margin-top: 24px; padding-left: 5px; }
.tv-icons svg { width: 16px; height: 16px; }
.tv-icons .tv-more { width: 12px; height: 12px; margin-left: 2px; }
.tv-list { height: 75px; padding: 0 8px 0 6px; }
.tv-l1 { display: flex; align-items: center; height: 29px; }
.tri { width: 0; height: 0; border: 5px solid transparent; border-top: 7px solid #5f6f80; border-bottom: 0; flex: none; }
.tv-l1 span { margin-left: 4px; font-size: 12px; }
.gear { width: 11px; height: 11px; margin-left: auto; margin-right: 1px; }
.sm-tri { border-width: 3px; border-top: 3px solid #777; margin-right: 1px; }
.tv-l2 { display: flex; align-items: center; height: 22px; margin-top: 9px; }
.tv-av { width: 18px; height: 18px; margin-left: 1px; }
.tv-l2 span { margin-left: 4px; font-size: 11.200px; letter-spacing: -.1px; white-space: nowrap; }
.dark { border-top-color: #333; margin-left: 5px; }
.tv-cur { width: 12px; height: 12px; margin-left: auto; margin-right: 3px; }
.tv-foot { height: 27px; background: #444; text-align: right; padding-right: 9px; }
.tv-foot a { color: #fff; text-decoration: underline; font: 11.500px/27px "Open Sans", sans-serif; }
.tv-side { position: absolute; left: -25px; top: 103px; width: 25px; height: 45px; background: #fff; border-radius: 6px 0 0 6px; border: 1px solid #e7e9ef; border-right: 0; padding: 9px 0 0 9px; }
.tv-side svg { width: 8px; height: 12px; }

.activate { position: absolute; left: 1607px; top: 952px; color: rgba(120,120,120,.6); font-family: "Open Sans", sans-serif; pointer-events: none; white-space: nowrap; }
.activate p { margin: 0; font-size: 19.500px; line-height: 27px; font-weight: 300; }
.activate small { display: block; font-size: 13.500px; line-height: 18px; }
```
